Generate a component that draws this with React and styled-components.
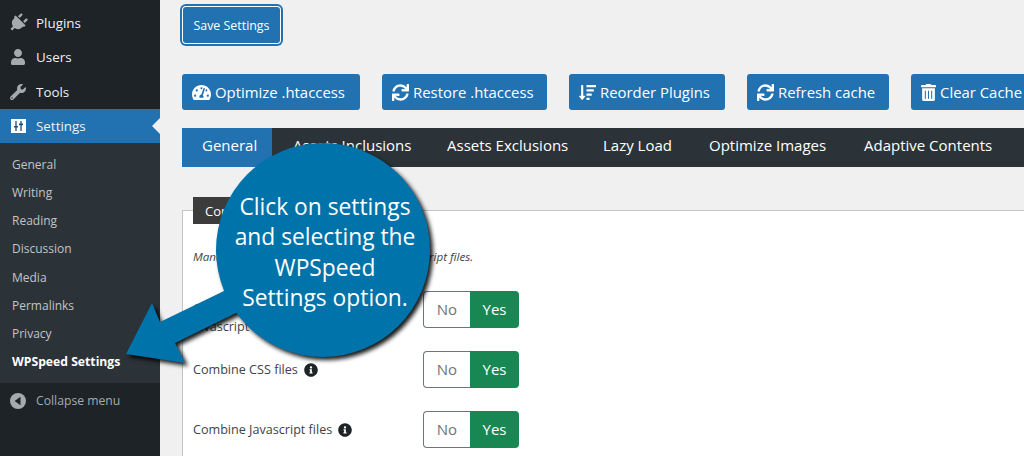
import React from 'react'
import styled, { createGlobalStyle } from 'styled-components'
import {
  FaPlug,
  FaUser,
  FaWrench,
  FaTachometerAlt,
  FaSync,
  FaSortAmountDown,
  FaTrashAlt,
  FaInfoCircle
} from 'react-icons/fa'

const GlobalStyle = createGlobalStyle`
  html, body {
    margin: 0;
    padding: 0;
    height: 456px;
    overflow: hidden;
    background: #f0f0f1;
    font-family: "Open Sans", "Liberation Sans", sans-serif;
  }
  * { box-sizing: border-box; }
`

const Page = styled.div`
  position: relative;
  display: flex;
  width: 1024px;
  height: 456px;
  overflow: hidden;
`

const Sidebar = styled.aside`
  flex: 0 0 160px;
  background: #1d2327;
  padding-top: 6px;
`

const MenuItem = styled.div`
  position: relative;
  display: flex;
  align-items: center;
  height: 34.3px;
  padding-left: 10px;
  gap: 10px;
  font-size: 13.4px;
  color: #f0f0f1;
  background: ${(p) => (p.$active ? '#2271b1' : 'transparent')};
  & svg {
    width: 16px;
    height: 16px;
    color: #a7aaad;
    flex: none;
  }
`

const PlugIcon = styled(FaPlug)`
  transform: rotate(45deg) scale(1.2);
`

const Notch = styled.span`
  position: absolute;
  right: 0;
  top: 9px;
  border: 8px solid transparent;
  border-right-color: #f0f0f1;
  border-left-width: 0;
`

const Submenu = styled.div`
  background: #2c3338;
  padding: 7px 0;
`

const SubItem = styled.div`
  display: flex;
  align-items: center;
  height: 28.2px;
  padding-left: 12px;
  font-size: ${(p) => (p.$current ? '12.2px' : '12px')};
  color: ${(p) => (p.$current ? '#fff' : '#c3c4c7')};
  font-weight: ${(p) => (p.$current ? 700 : 400)};
`

const Collapse = styled.div`
  display: flex;
  align-items: center;
  gap: 10px;
  height: 34px;
  margin-top: 1px;
  padding-left: 10px;
  font-size: 12.2px;
  color: #a7aaad;
  & svg { width: 16px; height: 16px; flex: none; }
`

const Main = styled.main`
  flex: 1;
  min-width: 0;
  padding: 7px 0 0 22px;
`

const SaveButton = styled.button`
  display: block;
  width: 97px;
  height: 36px;
  margin-left: 1px;
  padding: 0;
  border: 0;
  border-radius: 3px;
  background: #2271b1;
  color: #fff;
  font: 12.4px "Open Sans", sans-serif;
  box-shadow: 0 0 0 1px #fff, 0 0 0 3px #2271b1;
`

const ActionRow = styled.div`
  display: flex;
  gap: 22px;
  margin-top: 31px;
  white-space: nowrap;
`

const ActionButton = styled.div`
  flex: none;
  display: flex;
  align-items: center;
  gap: 4px;
  height: 36px;
  width: ${(p) => p.$w}px;
  padding-left: 10px;
  border-radius: 3px;
  background: #2271b1;
  color: #fff;
  font-size: 14.9px;
  & svg { width: ${(p) => p.$iconW}px; height: 17px; flex: none; }
`

const TabBar = styled.nav`
  display: flex;
  height: 39px;
  margin-top: 18px;
  background: #2c3338;
  white-space: nowrap;
`

const Tab = styled.div`
  flex: none;
  display: flex;
  align-items: center;
  width: ${(p) => p.$w}px;
  padding: 0 0 5px ${(p) => (p.$active ? 20 : 21)}px;
  font-size: 15px;
  color: #fff;
  background: ${(p) => (p.$active ? '#2271b1' : 'transparent')};
`

const Panel = styled.section`
  margin-top: 43px;
  height: 260px;
  background: #fff;
  border-top: 1px solid #c3c4c7;
  border-left: 1px solid #c3c4c7;
  padding-left: 10px;
`

const Legend = styled.div`
  display: flex;
  align-items: center;
  width: 150px;
  height: 27px;
  margin-top: -14px;
  padding-left: 12px;
  background: #3c3c3c;
  color: #fff;
  font-size: 13px;
`

const Intro = styled.p`
  margin: 25px 0 0;
  height: 18px;
  font-size: 11.6px;
  font-style: italic;
  color: #3c434a;
`

const Rows = styled.div`
  margin-top: 12px;
`

const Row = styled.div`
  display: flex;
  align-items: center;
  height: 60px;
`

const Label = styled.div`
  flex: 0 0 230px;
  display: flex;
  align-items: center;
  gap: 6px;
  padding-top: 1px;
  font-size: 12.6px;
  line-height: 18px;
  color: #3c434a;
  & svg { width: 14px; height: 14px; color: #1d2327; flex: none; }
`

const WrappedLabel = styled(Label)`
  align-self: flex-start;
  padding-top: 21px;
`

const Toggle = styled.div`
  display: flex;
  width: 96px;
  height: 37px;
  font-size: 15px;
`

const ToggleNo = styled.div`
  flex: 0 0 47px;
  display: flex;
  align-items: center;
  justify-content: center;
  border: 1px solid #6c757d;
  border-right: 0;
  border-radius: 4px 0 0 4px;
  color: #6c757d;
`

const ToggleYes = styled.div`
  flex: 1;
  display: flex;
  align-items: center;
  justify-content: center;
  border-radius: 0 4px 4px 0;
  background: #198754;
  color: #fff;
`

const Callout = styled.div`
  position: absolute;
  inset: 0;
  pointer-events: none;
`

const CalloutShape = styled.svg`
  display: block;
  filter: drop-shadow(3px 3px 2px rgba(0, 0, 0, 0.9));
`

const CalloutText = styled.div`
  position: absolute;
  left: 213px;
  top: 192px;
  width: 224px;
  text-align: center;
  color: #fff;
  font-size: 22.8px;
  line-height: 30.3px;
`

const SettingsGlyph = () => (
  <svg viewBox="0 0 16 16">
    <rect x="1" y="1" width="15" height="14" fill="#fff" />
    <path d="M6 3v10M11 3v10" stroke="#1d4f7a" strokeWidth="1.3" />
    <path d="M4 8h4v1.6H4zM9 5.6h4v1.6H9z" fill="#1d4f7a" />
  </svg>
)

const CollapseGlyph = () => (
  <svg viewBox="0 0 16 16">
    <circle cx="8" cy="8" r="8" fill="#a7aaad" />
    <path d="M10.5 3.8v8.4L4.6 8z" fill="#1d2327" />
  </svg>
)

const topMenu = [
  { name: 'Plugins', icon: <PlugIcon /> },
  { name: 'Users', icon: <FaUser /> },
  { name: 'Tools', icon: <FaWrench /> }
]

const subMenu = [
  'General',
  'Writing',
  'Reading',
  'Discussion',
  'Media',
  'Permalinks',
  'Privacy'
]

const actions = [
  { name: 'Optimize .htaccess', icon: <FaTachometerAlt />, w: 178, iconW: 19 },
  { name: 'Restore .htaccess', icon: <FaSync />, w: 165, iconW: 17 },
  { name: 'Reorder Plugins', icon: <FaSortAmountDown />, w: 156, iconW: 17 },
  { name: 'Refresh cache', icon: <FaSync />, w: 142, iconW: 17 },
  { name: 'Clear Cache', icon: <FaTrashAlt />, w: 125, iconW: 15 }
]

const tabs = [
  { name: 'General', w: 90, active: true },
  { name: 'Assets Inclusions', w: 154 },
  { name: 'Assets Exclusions', w: 156 },
  { name: 'Lazy Load', w: 106 },
  { name: 'Optimize Images', w: 155 },
  { name: 'Adaptive Contents', w: 181 }
]

export default function App() {
  return (
    <Page>
      <GlobalStyle />
      <Sidebar>
        {topMenu.map((item) => (
          <MenuItem key={item.name}>
            {item.icon}
            {item.name}
          </MenuItem>
        ))}
        <MenuItem $active>
          <SettingsGlyph />
          Settings
          <Notch />
        </MenuItem>
        <Submenu>
          {subMenu.map((name) => (
            <SubItem key={name}>{name}</SubItem>
          ))}
          <SubItem $current>WPSpeed Settings</SubItem>
        </Submenu>
        <Collapse>
          <CollapseGlyph />
          Collapse menu
        </Collapse>
      </Sidebar>
      <Main>
        <SaveButton>Save Settings</SaveButton>
        <ActionRow>
          {actions.map((a) => (
            <ActionButton key={a.name} $w={a.w} $iconW={a.iconW}>
              {a.icon}
              {a.name}
            </ActionButton>
          ))}
        </ActionRow>
        <TabBar>
          {tabs.map((t) => (
            <Tab key={t.name} $w={t.w} $active={t.active}>
              {t.name}
            </Tab>
          ))}
        </TabBar>
        <Panel>
          <Legend>Combine Files</Legend>
          <Intro>Manage the combining of your CSS and Javascript files.</Intro>
          <Rows>
            <Row>
              <WrappedLabel>
                <span>
                  Optimize CSS and
                  <br />
                  Javascript files
                </span>
              </WrappedLabel>
              <Toggle>
                <ToggleNo>No</ToggleNo>
                <ToggleYes>Yes</ToggleYes>
              </Toggle>
            </Row>
            {['Combine CSS files', 'Combine Javascript files'].map((label) => (
              <Row key={label}>
                <Label>
                  {label}
                  <FaInfoCircle />
                </Label>
                <Toggle>
                  <ToggleNo>No</ToggleNo>
                  <ToggleYes>Yes</ToggleYes>
                </Toggle>
              </Row>
            ))}
          </Rows>
        </Panel>
      </Main>
      <Callout>
        <CalloutShape width="1024" height="456" viewBox="0 0 1024 456">
          <path
            d="M126 354 L152 303 L160 322 L226 290 L300 250 L300 300 L238 312 L175 343 L185 363 Z"
            fill="#0073aa"
          />
          <circle cx="323" cy="250" r="107" fill="#0073aa" />
        </CalloutShape>
        <CalloutText>
          Click on settings
          <br />
          and selecting the
          <br />
          WPSpeed
          <br />
          Settings option.
        </CalloutText>
      </Callout>
    </Page>
  )
}
